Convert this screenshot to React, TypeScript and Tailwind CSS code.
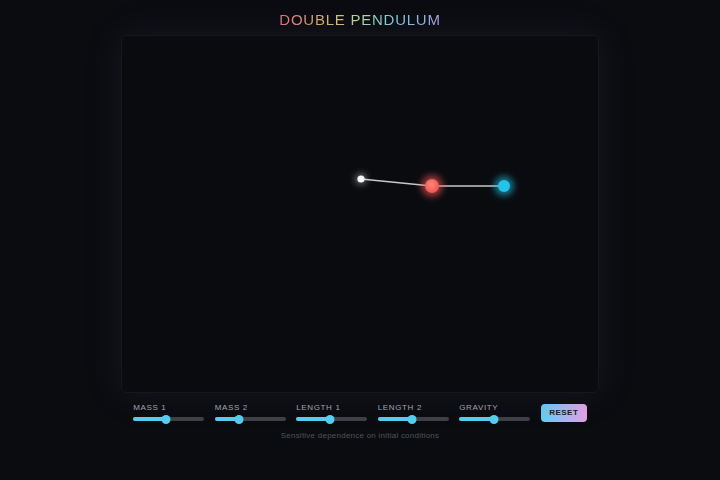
import React from 'react';

const sliders = [
  { label: 'MASS 1', value: 0.46 },
  { label: 'MASS 2', value: 0.34 },
  { label: 'LENGTH 1', value: 0.48 },
  { label: 'LENGTH 2', value: 0.48 },
  { label: 'GRAVITY', value: 0.49 },
];

function Slider({ label, value }: { label: string; value: number }) {
  return (
    <div className="flex w-[71px] flex-col gap-[1px]">
      <span className="mt-[1px] text-[8px] leading-[10px] tracking-[0.08em] text-[#a3a8b0]">{label}</span>
      <div className="relative h-[10px]">
        <div className="absolute left-0 right-0 top-[3px] h-[4px] rounded-full bg-[#3f4045]" />
        <div
          className="absolute left-0 top-[3px] h-[4px] rounded-full bg-[#55cdf0]"
          style={{ width: `${value * 100}%` }}
        />
        <div
          className="absolute top-[0.5px] h-[9px] w-[9px] -translate-x-1/2 rounded-full bg-[#55cdf0]"
          style={{ left: `${value * 100}%` }}
        />
      </div>
    </div>
  );
}

export default function App() {
  return (
    <div
      className="flex h-[480px] w-[720px] flex-col items-center bg-[#0b0c10] text-white"
      style={{ fontFamily: '"Liberation Sans", Arial, sans-serif' }}
    >
      <h1 className="mt-[11px] h-[18px] bg-[linear-gradient(90deg,#ea6f86_0%,#e0a070_20%,#d8c070_35%,#b8dca0_50%,#80d4e0_68%,#90b8ec_85%,#b8a4e8_100%)] bg-clip-text text-[15px] leading-[18px] tracking-[0.05em] text-transparent">
        DOUBLE PENDULUM
      </h1>

      <div className="relative mt-[6px] h-[358px] w-[478px] rounded-[6px] border border-[#15171d] bg-[#0a0b0f] shadow-[0_0_36px_rgba(70,80,110,0.18)]">
        <svg className="absolute inset-0" width="478" height="358" viewBox="0 0 478 358">
          <defs>
            <filter id="glow" x="-200%" y="-200%" width="500%" height="500%">
              <feGaussianBlur stdDeviation="3" />
            </filter>
            <radialGradient id="red" cx="45%" cy="40%" r="60%">
              <stop offset="0%" stopColor="#ff8a7a" />
              <stop offset="100%" stopColor="#f0524f" />
            </radialGradient>
          </defs>
          <line x1="239" y1="143" x2="310" y2="150" stroke="#c8c8c8" strokeWidth="1.6" />
          <line x1="310" y1="150" x2="382" y2="150" stroke="#c8c8c8" strokeWidth="1.6" />
          <circle cx="239" cy="143" r="6" fill="#ffffff" opacity="0.35" filter="url(#glow)" />
          <circle cx="239" cy="143" r="3.6" fill="#f4fbff" />
          <circle cx="310" cy="150" r="11" fill="#ff5a55" opacity="0.55" filter="url(#glow)" />
          <circle cx="310" cy="150" r="7" fill="url(#red)" />
          <circle cx="382" cy="150" r="10" fill="#22c8ee" opacity="0.55" filter="url(#glow)" />
          <circle cx="382" cy="150" r="6" fill="#22c4ea" />
        </svg>
      </div>

      <div className="mt-[9px] flex items-center gap-[10.5px]">
        {sliders.map((s) => (
          <Slider key={s.label} label={s.label} value={s.value} />
        ))}
        <button className="flex h-[18px] w-[46px] items-center justify-center rounded-[4px] bg-[linear-gradient(90deg,#5fd0f4,#a8b8f0,#e8a0e4)] text-[8px] font-bold tracking-[0.06em] text-[#1a1c2c]">
          RESET
        </button>
      </div>

      <p className="mt-[6px] text-[8px] tracking-[0.03em] text-[#4e535c]">
        Sensitive dependence on initial conditions
      </p>
    </div>
  );
}
